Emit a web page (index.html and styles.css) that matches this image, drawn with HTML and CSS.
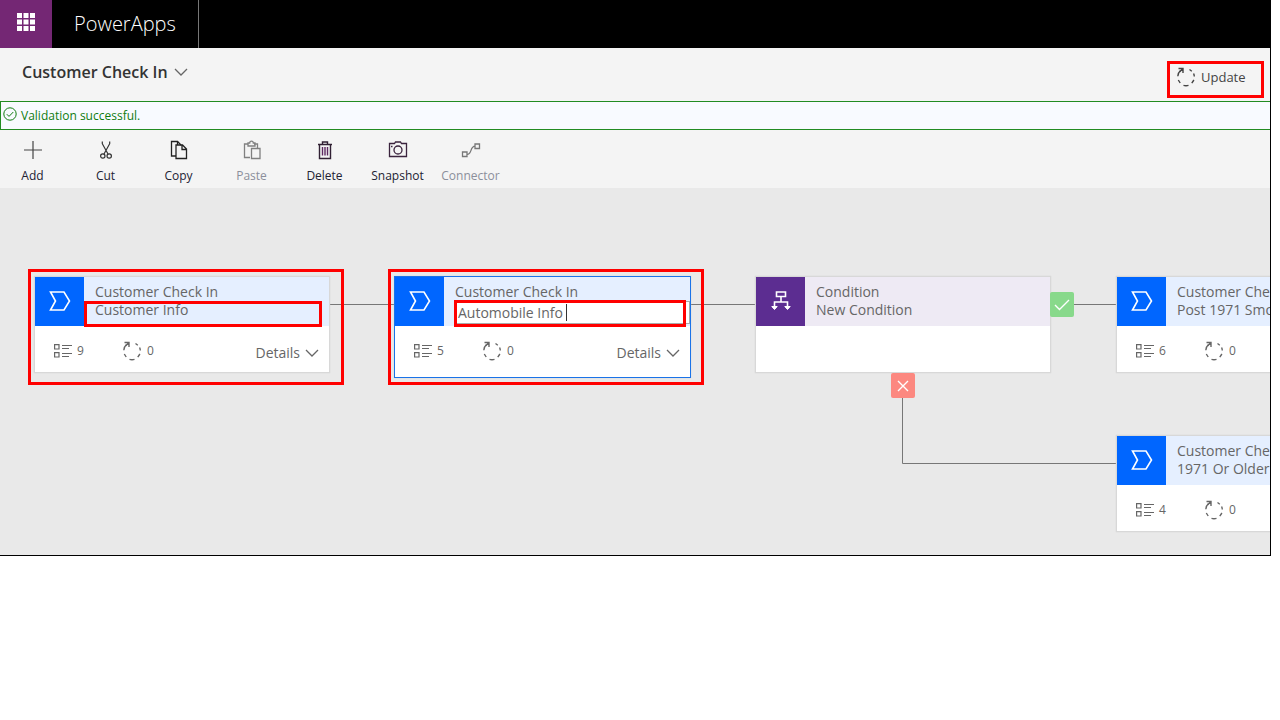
FILE: index.html
```html
<!DOCTYPE html>
<html lang="en">
<head>
<meta charset="utf-8">
<title>PowerApps - Customer Check In</title>
<link rel="stylesheet" href="styles.css">
</head>
<body>
<svg class="defs" aria-hidden="true">
  <symbol id="stage" viewBox="0 0 22 20"><path d="M1.500 1H15L20.500 10L15 19H1.500L6.500 10Z" fill="none" stroke="currentColor" stroke-width="1.600"/></symbol>
  <symbol id="fields" viewBox="0 0 18 14"><path d="M.6.6h4.400v4.400H.6zM.6 8.600h4.400V13H.6z" fill="none" stroke="currentColor" stroke-width="1.200"/><path d="M8 1.500h10M8 4.500h7M8 9.500h10M8 12.500h7" stroke="currentColor" stroke-width="1.200"/></symbol>
  <symbol id="cycle" viewBox="0 0 20 20"><g fill="none" stroke="currentColor" stroke-width="1.400"><path d="M4.500 3.500C2.800 5 1.800 7 1.800 9.300M2.300 13L4.200 16M7.500 18.300Q10 19.200 12.500 18.300M15.800 16.200L17.900 13M18.300 9.500Q18.200 7.800 17.600 6.500M15.800 4.200L13.500 2.500"/><path d="M2.500 1.500H7V6M7 1.500L3.500 5"/></g></symbol>
  <symbol id="chevron" viewBox="0 0 14 8"><path d="M1 1l6 6 6-6" fill="none" stroke="currentColor" stroke-width="1.300"/></symbol>
</svg>
<div class="app">
  <header class="topbar">
    <button class="waffle" aria-label="App launcher"><svg width="18" height="18" viewBox="0 0 18 18"><path d="M0 0h5v5H0zM6.500 0h5v5h-5zM13 0h5v5h-5zM0 6.500h5v5H0zM6.500 6.500h5v5h-5zM13 6.500h5v5h-5zM0 13h5v5H0zM6.500 13h5v5h-5zM13 13h5v5h-5z" fill="#fff"/></svg></button>
    <a class="brand" href="#">PowerApps</a>
  </header>
  <div class="titlebar">
    <button class="title">Customer Check In <svg width="14" height="8"><use href="#chevron"/></svg></button>
    <button class="update"><svg width="20" height="20"><use href="#cycle"/></svg>Update</button>
  </div>
  <div class="message" role="status">
    <svg width="14" height="14" viewBox="0 0 14 14" fill="none" stroke="currentColor"><circle cx="7" cy="7" r="6.200"/><path d="M3.800 7.200l2.200 2.200 4.300-4.400"/></svg>
    <span>Validation successful.</span>
  </div>
  <div class="toolbar" role="toolbar">
    <button class="tool"><svg width="20" height="20" viewBox="0 0 20 20"><path d="M10 1v18M1 10h18" stroke="#444" stroke-width="1.200"/></svg>Add</button>
    <button class="tool"><svg width="20" height="20" viewBox="0 0 20 20" fill="none" stroke="#333" stroke-width="1.200"><path d="M6.300 1.500v2.200L12 14M13.700 1.500v2.200L8 14"/><circle cx="6.800" cy="16" r="2.200"/><circle cx="13.200" cy="16" r="2.200"/></svg>Cut</button>
    <button class="tool"><svg width="20" height="20" viewBox="0 0 20 20" fill="none" stroke="#222" stroke-width="1.300"><path d="M7 16H2.500V1.500h6L12 5"/><path d="M7 5h6.500l4 4v9.500H7zM13 5.500V9.500h4.500M8.500 1.500v3"/></svg>Copy</button>
    <button class="tool" disabled><svg width="20" height="20" viewBox="0 0 20 20" fill="none" stroke="#808080" stroke-width="1.300"><path d="M8 17.500H2.500V4h4M12 4h3.500v4M6 6V3h1.700c0-2.600 3.600-2.600 3.600 0H13v3z"/><path d="M9.500 8.500h8.500v10H9.500z"/></svg>Paste</button>
    <button class="tool"><svg width="20" height="20" viewBox="0 0 20 20" fill="none" stroke="#302033" stroke-width="1.400"><path d="M3 4.500h14M7.500 4V2h5v2M4.500 4.500V18.500h11V4.500"/><path d="M7.500 7v8.500M10 7v8.500M12.500 7v8.500" stroke="#5c2960"/></svg>Delete</button>
    <button class="tool"><svg width="20" height="20" viewBox="0 0 20 20" fill="none" stroke="#3a233d" stroke-width="1.300"><path d="M1.500 3.500h5l1-1.500h5l1 1.500h5v13h-17z"/><circle cx="10" cy="10" r="4"/><path d="M3 6.500h1.500"/></svg>Snapshot</button>
    <button class="tool" disabled><svg width="20" height="20" viewBox="0 0 20 20" fill="none" stroke="#777" stroke-width="1.300"><path d="M1.500 12h4.500v4.500H1.500zM14 4h4.500v4.500H14zM6 14.500c5 0 3-8.300 8-8.300"/></svg>Connector</button>
  </div>
  <main class="canvas">
    <svg class="links" fill="none" stroke="#777"><path d="M330 116.500H394M691 116.500H755M1052 116.500H1116M902.500 186V275.500H1116"/></svg>

    <article class="node n1">
      <div class="head"><span class="badge"><svg width="22" height="20"><use href="#stage"/></svg></span><div class="names"><span>Customer Check In</span><span>Customer Info</span></div></div>
      <div class="foot"><span class="stat"><svg width="18" height="14"><use href="#fields"/></svg>9</span><span class="stat"><svg width="20" height="20"><use href="#cycle"/></svg>0</span><button class="details">Details <svg width="14" height="8"><use href="#chevron"/></svg></button></div>
    </article>

    <article class="node selected n2">
      <div class="head"><span class="badge"><svg width="22" height="20"><use href="#stage"/></svg></span><div class="names"><label for="step">Customer Check In</label><input id="step" type="text" value="Automobile Info"></div></div>
      <div class="foot"><span class="stat"><svg width="18" height="14"><use href="#fields"/></svg>5</span><span class="stat"><svg width="20" height="20"><use href="#cycle"/></svg>0</span><button class="details">Details <svg width="14" height="8"><use href="#chevron"/></svg></button></div>
      <span class="caret"></span>
    </article>

    <article class="node condition n3">
      <div class="head"><span class="badge"><svg width="20" height="20" viewBox="0 0 20 20" fill="none" stroke="#fff" stroke-width="1.600"><path d="M5.500 1h9v4.500h-9zM10 5.500V11M3.500 16V11h13v5"/><path d="M.8 15.500h5.400l-2.700 3zM13.800 15.500h5.400l-2.700 3z" fill="#fff" stroke-width="1"/></svg></span><div class="names"><span>Condition</span><span>New Condition</span></div></div>
      <div class="foot"></div>
    </article>
    <span class="branch yes"><svg width="16" height="12" viewBox="0 0 16 12"><path d="M1 6l4.500 4.500L15 1" fill="none" stroke="#fff" stroke-width="1.400"/></svg></span>
    <span class="branch no"><svg width="12" height="12" viewBox="0 0 12 12"><path d="M1 1l10 10M11 1L1 11" fill="none" stroke="#fff" stroke-width="1.400"/></svg></span>

    <article class="node n4">
      <div class="head"><span class="badge"><svg width="22" height="20"><use href="#stage"/></svg></span><div class="names"><span>Customer Check In</span><span>Post 1971 Smog</span></div></div>
      <div class="foot"><span class="stat"><svg width="18" height="14"><use href="#fields"/></svg>6</span><span class="stat"><svg width="20" height="20"><use href="#cycle"/></svg>0</span></div>
    </article>
    <article class="node n5">
      <div class="head"><span class="badge"><svg width="22" height="20"><use href="#stage"/></svg></span><div class="names"><span>Customer Check In</span><span>1971 Or Older</span></div></div>
      <div class="foot"><span class="stat"><svg width="18" height="14"><use href="#fields"/></svg>4</span><span class="stat"><svg width="20" height="20"><use href="#cycle"/></svg>0</span></div>
    </article>

    <div class="mark m1"></div>
    <div class="mark m2"></div>
    <div class="mark m3"></div>
    <div class="mark m4"></div>
  </main>
</div>
</body>
</html>
```
FILE: styles.css
```css
* { box-sizing: border-box; }
body { margin: 0; background: #fff; font-family: "Open Sans", "Noto Sans", sans-serif; font-size: 14px; color: #333; }
button { font: inherit; color: inherit; background: none; border: 0; padding: 0; }
svg { display: block; flex: none; }
.defs { position: absolute; width: 0; height: 0; }
.app { margin-right: 9px; border: solid #000; border-width: 0 1px 1px 0; background: #f4f4f4; }

.topbar { display: flex; height: 48px; background: #000; }
.waffle { width: 52px; padding-bottom: 4px; display: flex; align-items: center; justify-content: center; background: #742774; }
.brand { display: flex; align-items: center; padding: 0 22px 2px; border-right: 1px solid #777; color: #fff; font-size: 20px; font-weight: 300; text-decoration: none; }

.titlebar { display: flex; justify-content: space-between; align-items: flex-start; height: 53px; padding: 12px 6px 0 22px; }
.title { display: flex; align-items: center; gap: 6px; font-size: 16px; line-height: 24px; font-weight: 600; }
.title svg { color: #666; }
.update { display: flex; align-items: center; gap: 5px; width: 97px; height: 37px; padding: 0 0 6px 6px; margin-top: 1px; border: 3px solid #f00; font-size: 13px; color: #444; }

.message { display: flex; gap: 4px; height: 29px; padding: 5px 2px; border: 1px solid #228b22; border-right: 0; background: #f8faff; color: #107c10; font-size: 12px; line-height: 18px; }

.toolbar { display: flex; gap: 9px; height: 58px; padding-top: 10px; }
.tool { width: 65px; margin-right: -1px; display: flex; flex-direction: column; align-items: center; gap: 7px; font-size: 12px; line-height: 18px; color: #223; white-space: nowrap; }
.tool:disabled { color: #8b8f9b; }

.canvas { position: relative; height: 367px; overflow: hidden; background: #e9e9e9; }
.links { position: absolute; inset: 0; width: 100%; height: 100%; }
.node { position: absolute; width: 296px; border: 1px solid #d8d8d8; background: #fff; color: #666; box-shadow: 0 0 1px #ccc; }
.n1 { left: 34px; top: 88px; }
.n2 { left: 394px; top: 88px; }
.n3 { left: 755px; top: 88px; }
.n4 { left: 1116px; top: 88px; }
.n5 { left: 1116px; top: 247px; }
.head { display: flex; height: 49px; background: #e5efff; }
.badge { display: flex; align-items: center; justify-content: center; width: 49px; padding-bottom: 2px; background: #0066ff; color: #fff; flex: none; }
.names { display: flex; flex-direction: column; flex: 1; padding: 6px 0 0 11px; line-height: 18px; white-space: nowrap; }
.names input { height: 23px; padding: 0 2px; border: 1px solid #aaa; font: inherit; color: #666; background: #fff; }
.foot { display: flex; align-items: center; height: 46px; padding: 3px 10px 0 19px; }
.stat { display: flex; align-items: center; gap: 5px; width: 68px; font-size: 12px; }
.details { display: flex; align-items: center; gap: 5px; margin-left: auto; padding-top: 4px; }
.selected { width: 297px; height: 102px; border-color: #1a73e8; }
.caret { position: absolute; left: 171px; top: 27px; width: 1px; height: 17px; background: #333; }
.condition .head { background: #eeeaf4; }
.condition .badge { background: #5c2d91; }
.branch { position: absolute; display: flex; align-items: center; justify-content: center; width: 24px; height: 25px; border-radius: 2px; }
.yes { left: 1050px; top: 104px; background: #88d98b; }
.no { left: 891px; top: 185px; background: #fc8880; }

.mark { position: absolute; border: 3px solid #f00; pointer-events: none; }
.m1 { left: 28px; top: 81px; width: 316px; height: 116px; }
.m2 { left: 388px; top: 81px; width: 316px; height: 116px; }
.m3 { left: 84px; top: 113px; width: 238px; height: 26px; }
.m4 { left: 454px; top: 112px; width: 232px; height: 27px; }
```
